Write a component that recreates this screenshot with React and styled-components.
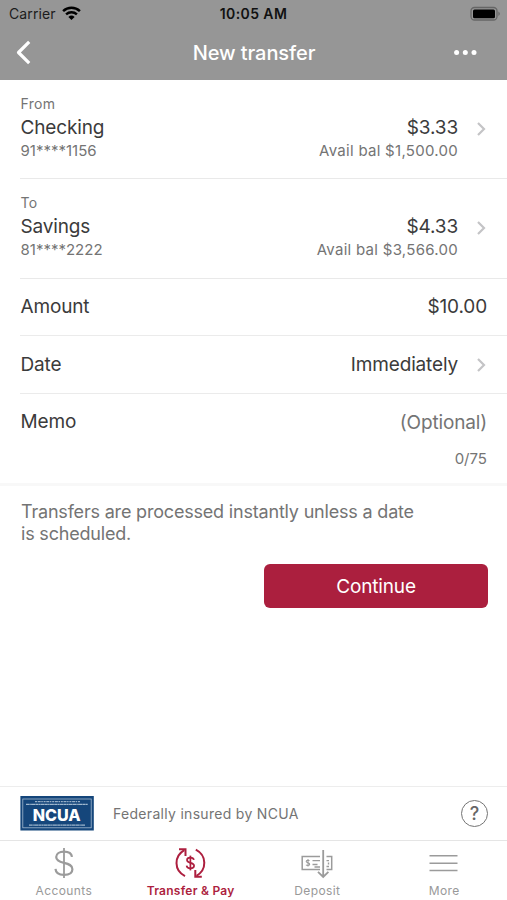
import React from "react";
import styled, { createGlobalStyle } from "styled-components";

const accounts = [
  {
    label: "From",
    name: "Checking",
    number: "91****1156",
    balance: "$3.33",
    available: "Avail bal $1,500.00",
  },
  {
    label: "To",
    name: "Savings",
    number: "81****2222",
    balance: "$4.33",
    available: "Avail bal $3,566.00",
  },
];

const tabs = [
  { label: "Accounts", icon: <DollarIcon /> },
  { label: "Transfer & Pay", icon: <TransferIcon />, active: true },
  { label: "Deposit", icon: <DepositIcon /> },
  { label: "More", icon: <MenuIcon /> },
];

export default function App() {
  return (
    <>
      <GlobalStyle />
      <Screen>
        <Header>
          <StatusBar>
            <Carrier>
              Carrier
              <WifiIcon />
            </Carrier>
            <Clock>10:05 AM</Clock>
            <BatteryIcon />
          </StatusBar>
          <NavBar>
            <BackIcon />
            <Title>New transfer</Title>
            <DotsIcon />
          </NavBar>
        </Header>

        <Form>
          {accounts.map((account) => (
            <AccountRow key={account.label}>
              <AccountInfo>
                <SmallLabel>{account.label}</SmallLabel>
                <Name>{account.name}</Name>
                <Detail>{account.number}</Detail>
              </AccountInfo>
              <AccountBalance>
                <Name>{account.balance}</Name>
                <Available>{account.available}</Available>
              </AccountBalance>
              <ChevronIcon />
            </AccountRow>
          ))}
          <FieldRow $height="57px">
            <Name>Amount</Name>
            <Name>$10.00</Name>
          </FieldRow>
          <FieldRow $height="58px">
            <Name>Date</Name>
            <FieldValue>
              <Name>Immediately</Name>
              <ChevronIcon />
            </FieldValue>
          </FieldRow>
          <MemoRow>
            <Name>Memo</Name>
            <MemoValue>
              <Placeholder>(Optional)</Placeholder>
              <Detail>0/75</Detail>
            </MemoValue>
          </MemoRow>
        </Form>

        <Content>
          <Note>
            Transfers are processed instantly unless a date
            <br />
            is scheduled.
          </Note>
          <ContinueButton>Continue</ContinueButton>
        </Content>

        <Insurance>
          <NcuaLogo />
          <InsuranceText>Federally insured by NCUA</InsuranceText>
          <HelpButton>?</HelpButton>
        </Insurance>

        <TabBar>
          {tabs.map((tab) => (
            <Tab key={tab.label}>
              {tab.icon}
              <TabLabel $active={tab.active}>{tab.label}</TabLabel>
            </Tab>
          ))}
        </TabBar>
      </Screen>
    </>
  );
}

function WifiIcon() {
  return (
    <svg width="19" height="15" viewBox="0 0 19 15" fill="none" stroke="#000">
      <path d="M1.1 5.2a12.2 12.2 0 0 1 16.8 0" strokeWidth="2.5" />
      <path d="M4.1 8.4a7.9 7.9 0 0 1 10.8 0" strokeWidth="2.4" />
      <path d="M9.5 14 6.4 10.9a4.5 4.5 0 0 1 6.2 0z" fill="#000" stroke="none" />
    </svg>
  );
}

function BatteryIcon() {
  return (
    <svg width="31" height="16" viewBox="0 0 31 16">
      <rect x="1" y="1.5" width="26" height="12.5" rx="3.5" fill="none" stroke="#666" strokeWidth="1.3" />
      <rect x="3" y="3.5" width="22" height="8.7" rx="1.5" fill="#000" />
      <path d="M28.4 5.6c1.9.8 1.9 3.7 0 4.5z" fill="#666" />
    </svg>
  );
}

function BackIcon() {
  return (
    <svg width="16" height="26" viewBox="0 0 16 26" fill="none" stroke="#fff" strokeWidth="3.2">
      <path d="M14.2 1.8 3.5 12.5l10.7 10.7" strokeLinejoin="round" />
    </svg>
  );
}

function DotsIcon() {
  return (
    <svg width="24" height="6" viewBox="0 0 24 6" fill="#fff">
      <circle cx="3.6" cy="2.5" r="2.5" />
      <circle cx="12.3" cy="2.5" r="2.5" />
      <circle cx="21" cy="2.5" r="2.5" />
    </svg>
  );
}

function ChevronIcon() {
  return (
    <svg width="10" height="16" viewBox="0 0 10 16" fill="none" stroke="#c4c4c6" strokeWidth="2.2">
      <path d="M1 2l6 6-6 6" />
    </svg>
  );
}

function DollarIcon() {
  return (
    <svg width="22" height="32" viewBox="0 0 22 32" fill="none" stroke="#9b9b9b" strokeWidth="2.2">
      <path d="M11 1v30" strokeWidth="1.8" />
      <path d="M19 9.8C18.5 6 15.4 4.6 11 4.6 6.400 4.6 3.2 6.700 3.2 10c0 3.800 3.300 4.900 7.800 5.900 5 1.100 8.400 2.300 8.400 6.300 0 3.600-3.500 5.600-8.400 5.600-5 0-8.200-2-8.500-6" />
    </svg>
  );
}

function TransferIcon() {
  return (
    <svg width="32" height="32" viewBox="0 0 32 32" fill="none" stroke="#ad1f3f" strokeWidth="2">
      <path d="M10 29.2C-1.200 23.5-1.200 9.300 9.300 3.200" />
      <path d="M4 2.300h6.500v6.800" />
      <path d="M20.800 2.700c11.200 5.800 11.200 20 .7 26.100" />
      <path d="M26.800 29.700h-6.500v-6.800" />
      <path d="M15.400 8.600v14.800" strokeWidth="1.7" />
      <path d="M18.900 12.900c-.3-1.600-1.600-2.200-3.500-2.200s-3.400.8-3.400 2.400c0 1.800 1.500 2.300 3.400 2.700 2.100.5 3.700 1 3.700 2.900 0 1.800-1.600 2.600-3.700 2.600s-3.600-.8-3.800-2.600" strokeWidth="1.7" />
    </svg>
  );
}

function DepositIcon() {
  return (
    <svg width="32" height="32" viewBox="0 0 32 32" fill="none" stroke="#9b9b9b" strokeWidth="1.5">
      <path d="M19 9.500H1.200v13H19M25.500 9.500h5.200v13h-5.200" />
      <path d="M22.200 3v26.500M17 24.800l5.200 5.200 5.200-5.200" strokeWidth="1.8" />
      <path d="M11.500 13.600H19M11.500 17.500h5M13.500 20H19M25.500 13.600H28M27.500 15.500v2M25.500 19.500H28" strokeWidth="1.4" />
      <path d="M8.500 13.800c-.5-.7-3.300-.9-3.300.7 0 1.700 3.500.9 3.500 2.700 0 1.600-3 1.500-3.700.5M7 12v7.500" strokeWidth="1.1" />
    </svg>
  );
}

function MenuIcon() {
  return (
    <svg width="30" height="32" viewBox="0 0 30 32" stroke="#9b9b9b" strokeWidth="1.5">
      <path d="M.5 8.7h28M.5 16.2h28M.5 23.4h28" />
    </svg>
  );
}

function NcuaLogo() {
  return (
    <svg width="74" height="35" viewBox="0 0 74 35">
      <rect x=".4" width="73.4" height="34.5" fill="#15467b" />
      <rect x="2.8" y="3" width="68.4" height="28.8" fill="none" stroke="#a3bad0" strokeWidth=".8" />
      <path d="M15 5.7h45" stroke="#b8c9db" strokeWidth="1" strokeDasharray="2 .7 3 .6 1.5 .8" />
      <path d="M6 8.3h62M9 29.2h56" stroke="#9fb7ce" strokeWidth="1.2" strokeDasharray="3 .3 1.5 .3 4 .3" />
      <text x="36.7" y="24.6" textAnchor="middle" textLength="48" lengthAdjust="spacingAndGlyphs" fill="#fff" fontSize="15.8" fontWeight="800">
        NCUA
      </text>
    </svg>
  );
}

const GlobalStyle = createGlobalStyle`
  * {
    box-sizing: border-box;
  }

  body {
    margin: 0;
    background-color: #fff;
    font-family: Inter, "Liberation Sans", sans-serif;
  }

  svg {
    display: block;
    flex-shrink: 0;
  }
`;

const Screen = styled.div`
  width: 507px;
  height: 900px;
  display: flex;
  flex-direction: column;
  overflow: hidden;
  background-color: #fff;
`;

const Header = styled.header`
  height: 80px;
  background-color: #969696;
`;

const StatusBar = styled.div`
  height: 27px;
  padding: 0 6px 0 9px;
  display: grid;
  grid-template-columns: 1fr auto 1fr;
  align-items: center;

  > svg {
    justify-self: end;
  }
`;

const Carrier = styled.div`
  display: flex;
  align-items: center;
  gap: 6px;
  font-size: 14px;
  letter-spacing: 0.1px;
  color: #1c1c1c;
`;

const Clock = styled.div`
  margin-right: 3px;
  font-size: 14px;
  font-weight: 600;
  letter-spacing: 0.4px;
  color: #111;
`;

const NavBar = styled.div`
  height: 51px;
  padding: 0 30px 0 15px;
  display: grid;
  grid-template-columns: 1fr auto 1fr;
  align-items: center;

  > svg:last-child {
    justify-self: end;
  }
`;

const Title = styled.h1`
  margin: 0 0 0 16px;
  font-size: 20px;
  font-weight: 500;
  letter-spacing: -0.08px;
  color: #fff;
`;

const Form = styled.div`
  border-bottom: 3px solid #f8f8f8;
`;

const AccountRow = styled.div`
  height: 99px;
  margin-left: 20px;
  padding: 14px 20px 0 0.5px;
  display: flex;
  border-bottom: 1px solid #e9e9e9;

  & + & {
    height: 100px;
  }

  > svg {
    margin: 27px 0 0 19px;
  }
`;

const AccountInfo = styled.div`
  flex: 1;
`;

const AccountBalance = styled.div`
  padding-top: 21px;
  text-align: right;
`;

const SmallLabel = styled.div`
  margin-bottom: 2px;
  font-size: 14px;
  line-height: 19px;
  letter-spacing: 0.3px;
  color: #747474;
`;

const Name = styled.div`
  font-size: 19px;
  line-height: 26px;
  letter-spacing: -0.15px;
  color: #3b3b3b;
`;

const Detail = styled.div`
  font-size: 15px;
  line-height: 20px;
  color: #747474;
`;

const Available = styled(Detail)`
  letter-spacing: 0.28px;
`;

const FieldRow = styled.div`
  height: ${(props) => props.$height};
  margin-left: 20px;
  padding: 0 20px 0 0.5px;
  display: flex;
  align-items: center;
  justify-content: space-between;
  border-bottom: 1px solid #ebebeb;
`;

const FieldValue = styled.div`
  display: flex;
  align-items: center;
  gap: 19px;
`;

const MemoRow = styled.div`
  height: 89px;
  padding: 15px 20px 0 20.5px;
  display: flex;
  justify-content: space-between;
`;

const MemoValue = styled.div`
  display: flex;
  flex-direction: column;
  gap: 13px;
  padding-top: 1px;
  text-align: right;
`;

const Placeholder = styled(Name)`
  color: #747474;
`;

const Content = styled.main`
  flex: 1;
  padding: 15px 19px 0 21px;
  display: flex;
  flex-direction: column;
`;

const Note = styled.p`
  margin: 0;
  font-size: 18px;
  line-height: 22px;
  letter-spacing: -0.19px;
  color: #747474;
`;

const ContinueButton = styled.button`
  width: 224px;
  height: 44px;
  margin-top: 19px;
  align-self: flex-end;
  border: none;
  border-radius: 6px;
  background-color: #ab1f3e;
  color: #fff;
  font-family: inherit;
  font-size: 19px;
  letter-spacing: -0.15px;
`;

const Insurance = styled.div`
  height: 54px;
  padding: 0 19px 0 20px;
  display: flex;
  align-items: center;
  border-top: 1px solid #ededed;
`;

const InsuranceText = styled.div`
  flex: 1;
  margin-left: 19px;
  font-size: 14px;
  letter-spacing: 0.3px;
  color: #747474;
`;

const HelpButton = styled.button`
  width: 27px;
  height: 27px;
  padding: 0;
  border: 1.5px solid #747474;
  border-radius: 50%;
  background: none;
  color: #666;
  font-family: inherit;
  font-size: 18px;
  font-weight: 500;
  line-height: 24px;
`;

const TabBar = styled.nav`
  height: 60px;
  display: grid;
  grid-template-columns: repeat(4, 1fr);
  border-top: 1px solid #e5e5e5;
`;

const Tab = styled.div`
  padding: 6px 0 0 1px;
  display: flex;
  flex-direction: column;
  align-items: center;
`;

const TabLabel = styled.div`
  margin-top: 4px;
  font-size: 12px;
  line-height: 16px;
  letter-spacing: ${(props) => (props.$active ? "0.25px" : "0.4px")};
  font-weight: ${(props) => (props.$active ? 600 : 400)};
  color: ${(props) => (props.$active ? "#ad1f3f" : "#999")};
`;
